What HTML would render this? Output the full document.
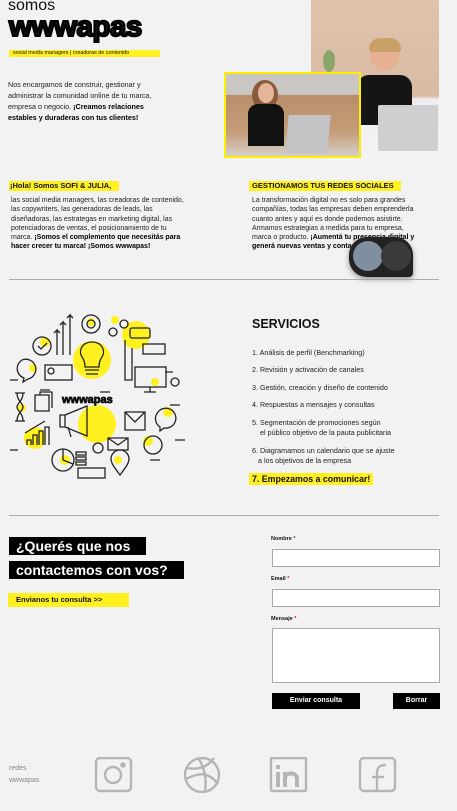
<!DOCTYPE html>
<html><head><meta charset="utf-8"><style>
*{margin:0;padding:0;box-sizing:border-box}
body{width:457px;height:811px;background:#f2f2f2;font-family:"Liberation Sans",sans-serif;color:#111;position:relative;overflow:hidden}
.a{position:absolute}
.p{font-size:7px;line-height:9.3px;color:#222}
.hl{background:#fff01f}
.blk{background:#000;color:#fff}
.in{background:#fff;border:1px solid #aaa}
.lbl{font-size:5.5px;font-weight:bold}
.lbl b{color:#d00}
.svc{font-size:7.2px;color:#222;line-height:9.5px}
</style></head><body>

<div class="a" style="left:8px;top:-3px;font-size:16px;color:#111">somos</div>
<div class="a" style="left:9px;top:12px;font-size:29px;font-weight:bold;letter-spacing:-0.5px;line-height:30px;-webkit-text-stroke:2px #000;transform:scaleX(1.02);transform-origin:left">wwwapas</div>
<div class="a hl" style="left:9px;top:50px;width:151px;height:7px;font-size:5.4px;line-height:7px;padding-left:4px">social media managers | creadoras de contenido</div>
<div class="a" style="left:8px;top:79px;width:160px;font-size:7.2px;line-height:11px;color:#222">Nos encargamos de construir, gestionar y administrar la comunidad online de tu marca, empresa o negocio. <b style="color:#000">¡Creamos relaciones estables y duraderas con tus clientes!</b></div>

<!-- photos -->
<div class="a" style="left:311px;top:0;width:128px;height:160px;background:linear-gradient(#e0c3ad,#d9bba4 60%,#ededed 62%,#f4f4f4)"></div>
<div class="a" style="left:370px;top:40px;width:30px;height:30px;border-radius:50%;background:#e6b093"></div>
<div class="a" style="left:369px;top:38px;width:32px;height:14px;border-radius:15px 15px 4px 4px;background:#c9a066"></div>
<div class="a" style="left:357px;top:75px;width:55px;height:50px;border-radius:12px 12px 0 0;background:#151515"></div>
<div class="a" style="left:378px;top:105px;width:60px;height:46px;background:#cfcfd2;border-radius:2px"></div>
<div class="a" style="left:323px;top:50px;width:12px;height:22px;background:#8aa66a;border-radius:50%"></div>
<div class="a" style="left:224px;top:72px;width:137px;height:86px;border:2px solid #ffef00;background:linear-gradient(#c9c6c4 0,#c9c6c4 25%,#b88e6b 26%,#c59c78 70%,#d5cfc9 100%)"></div>
<div class="a" style="left:252px;top:80px;width:26px;height:30px;border-radius:50%;background:#8b5a3a"></div>
<div class="a" style="left:258px;top:83px;width:16px;height:20px;border-radius:50%;background:#e5b59a"></div>
<div class="a" style="left:248px;top:104px;width:36px;height:42px;border-radius:10px 10px 0 0;background:#111"></div>
<div class="a" style="left:287px;top:115px;width:42px;height:38px;background:#c4c4c6;transform:skewX(-5deg)"></div>

<!-- two columns -->
<div class="a hl" style="left:9px;top:181px;width:110px;height:10px;font-size:7.5px;font-weight:bold;line-height:10px;padding-left:1px">¡Hola! Somos SOFI &amp; JULIA,</div>
<div class="a p" style="left:11px;top:196px;width:175px">las social media managers, las creadoras de contenido, las copywriters, las generadoras de leads, las diseñadoras, las estrategas en marketing digital, las potenciadoras de ventas, el posicionamiento de tu marca. <b style="color:#000">¡Somos el complemento que necesitás para hacer crecer tu marca! ¡Somos wwwapas!</b></div>
<div class="a hl" style="left:249px;top:181px;width:152px;height:10px;font-size:7.5px;font-weight:bold;line-height:10px;padding-left:3px">GESTIONAMOS TUS REDES SOCIALES</div>
<div class="a p" style="left:252px;top:196px;width:165px">La transformación digital no es solo para grandes compañías, todas las empresas deben emprenderla cuanto antes y aquí es donde podemos asistirte. Armamos estrategias a medida para tu empresa, marca o producto. <b style="color:#000">¡Aumentá tu presencia digital y generá nuevas ventas y contactos!</b></div>
<div class="a" style="left:349px;top:237px;width:64px;height:40px;background:#222;border-radius:18px 18px 4px 18px;box-shadow:0 2px 6px rgba(0,0,0,.4)"></div>
<div class="a" style="left:353px;top:241px;width:30px;height:30px;border-radius:50%;background:#7f8fa0"></div>
<div class="a" style="left:381px;top:241px;width:30px;height:30px;border-radius:50%;background:#3a3a3a"></div>

<div class="a" style="left:9px;top:279px;width:430px;height:1px;background:#aaa"></div>

<!-- illustration -->
<svg class="a" style="left:0;top:300px" width="200" height="180" viewBox="0 0 200 180" fill="none" stroke="#222" stroke-width="1.3">
<g fill="#fff01f" stroke="none">
<circle cx="92" cy="60" r="19"/><circle cx="136" cy="35" r="14"/><circle cx="97" cy="124" r="19"/><circle cx="35" cy="138" r="11"/><circle cx="115" cy="20" r="4"/><circle cx="91" cy="22" r="4"/><circle cx="45" cy="42" r="5"/><circle cx="33" cy="68" r="4"/><circle cx="155" cy="82" r="4"/><circle cx="22" cy="108" r="4"/><circle cx="168" cy="112" r="5"/><circle cx="148" cy="141" r="5"/><circle cx="118" cy="160" r="4"/><circle cx="65" cy="160" r="5"/>
</g>
<circle cx="42" cy="46" r="9"/><path d="M38 46l3 3 6-6"/>
<path d="M57 55V30l-3 3M57 30l3 3M63 55V22l-3 3M63 22l3 3M70 55V15l-3 3M70 15l3 3"/>
<circle cx="91" cy="24" r="9"/><circle cx="91" cy="24" r="4"/>
<path d="M92 42c-10 0-14 9-10 15 3 4 3 8 3 10h14c0-2 0-6 3-10 4-6 0-15-10-15zM85 70h14M86 74h12"/>
<circle cx="124" cy="24" r="4"/><circle cx="113" cy="32" r="4"/>
<rect x="130" y="28" width="20" height="10" rx="2"/><path d="M125 40v40h7V48"/>
<rect x="143" y="44" width="22" height="10"/>
<rect x="45" y="65" width="27" height="15"/><circle cx="51" cy="71" r="3"/>
<path d="M22 60a10 10 0 1 1 6 19l-5 3 1-4a10 10 0 0 1-2-18z"/>
<rect x="135" y="67" width="31" height="20"/><path d="M150 87v5M144 92h12"/><circle cx="175" cy="82" r="4"/>
<path d="M15 93h10M15 121h10M17 93c0 8 6 10 6 14s-6 6-6 14M23 93c0 8-6 10-6 14s6 6 6 14"/>
<path d="M35 95h14v16H35zM40 95v-3h12v16"/>
<text x="62" y="103" font-family="Liberation Sans" font-weight="bold" font-size="11" fill="#111" stroke="#111" stroke-width="0.8">wwwapas</text>
<path d="M158 112a10 10 0 1 1 6 16l-4 3v-4a10 10 0 0 1-2-15z"/>
<path d="M65 115l22-9v30l-22-9zM65 115v12h-5v-12zM68 127l3 10"/>
<path d="M125 112h20v18h-20zM125 112l10 10 10-10"/>
<path d="M27 145v-5h4v5M33 145v-10h4v10M39 145v-14h4v14M45 145v-18h4v18M25 133l20-12"/>
<path d="M108 138h20v12h-20zM108 138l10 7 10-7"/>
<circle cx="153" cy="145" r="9"/>
<circle cx="98" cy="148" r="5"/>
<circle cx="63" cy="160" r="11"/><path d="M63 160V149M63 160l10 4"/>
<rect x="76" y="152" width="10" height="3"/><rect x="76" y="157" width="10" height="3"/><rect x="76" y="162" width="10" height="3"/>
<rect x="78" y="168" width="27" height="10"/>
<path d="M120 175c-6-8-9-12-9-16a9 9 0 0 1 18 0c0 4-3 8-9 16z"/>
<path d="M10 80h8M40 90h10M170 105h10M175 140h10M10 150h8M100 92h10M165 72h8M150 160h10"/>
</svg>

<!-- services -->
<div class="a" style="left:252px;top:317px;font-size:12.5px;font-weight:bold">SERVICIOS</div>
<div class="a svc" style="left:252px;top:348px">1. Análisis de perfil (Benchmarking)</div>
<div class="a svc" style="left:252px;top:365px">2. Revisión y activación de canales</div>
<div class="a svc" style="left:252px;top:383px">3. Gestión, creación y diseño de contenido</div>
<div class="a svc" style="left:252px;top:400px">4. Respuestas a mensajes y consultas</div>
<div class="a svc" style="left:252px;top:418px">5. Segmentación de promociones según<br>&nbsp;&nbsp;&nbsp;&nbsp;el público objetivo de la pauta publicitaria</div>
<div class="a svc" style="left:252px;top:446px">6. Diagramamos un calendario que se ajuste<br>&nbsp;&nbsp;&nbsp;a los objetivos de la empresa</div>
<div class="a hl" style="left:249px;top:473px;width:124px;height:12px;font-size:8.8px;font-weight:bold;line-height:12px;padding-left:3px">7. Empezamos a comunicar!</div>

<div class="a" style="left:9px;top:515px;width:430px;height:1px;background:#aaa"></div>

<!-- contact -->
<div class="a blk" style="left:9px;top:537px;width:137px;height:18px;font-size:14px;font-weight:bold;line-height:18px;padding-left:7px">¿Querés que nos</div>
<div class="a blk" style="left:9px;top:561px;width:175px;height:18px;font-size:14px;font-weight:bold;line-height:18px;padding-left:7px">contactemos con vos?</div>
<div class="a hl" style="left:8px;top:593px;width:121px;height:14px;font-size:7.5px;font-weight:bold;line-height:14px;padding-left:8px">Envianos tu consulta &gt;&gt;</div>

<div class="a lbl" style="left:271px;top:536px">Nombre <b>*</b></div>
<div class="a in" style="left:272px;top:549px;width:168px;height:18px"></div>
<div class="a lbl" style="left:271px;top:576px">Email <b>*</b></div>
<div class="a in" style="left:272px;top:589px;width:168px;height:18px"></div>
<div class="a lbl" style="left:271px;top:616px">Mensaje <b>*</b></div>
<div class="a in" style="left:272px;top:628px;width:168px;height:55px"></div>
<div class="a blk" style="left:272px;top:693px;width:88px;height:16px;font-size:7px;font-weight:bold;line-height:16px;text-align:center">Enviar consulta</div>
<div class="a blk" style="left:393px;top:693px;width:47px;height:16px;font-size:7px;font-weight:bold;line-height:16px;text-align:center">Borrar</div>

<div class="a" style="left:9px;top:763px;font-size:7px;line-height:12px;color:#888">redes<br>wwwapas</div>
<svg class="a" style="left:94px;top:757px" width="346" height="36" viewBox="0 0 346 36" fill="none" stroke="#b5b5b5" stroke-width="2.4">
<rect x="2" y="1" width="35" height="33" rx="4"/><circle cx="19" cy="18" r="8"/><circle cx="29" cy="8" r="1.6" fill="#b5b5b5"/>
<circle cx="108" cy="18" r="17"/><path d="M93 11c10 2 20 0 27-10M92 22c12-6 22-8 32 5M104 1c6 8 9 20 7 34"/>
<rect x="177" y="1" width="35" height="33" rx="1"/><path d="M184 12v-4M184 15v15M191 30V15M191 20c2-5 12-5 12 2v8" stroke-width="4"/>
<rect x="266" y="1" width="35" height="33" rx="4"/><path d="M283 35V16c0-6 3-8 9-8M278 20h12"/>
</svg>
</body></html>
